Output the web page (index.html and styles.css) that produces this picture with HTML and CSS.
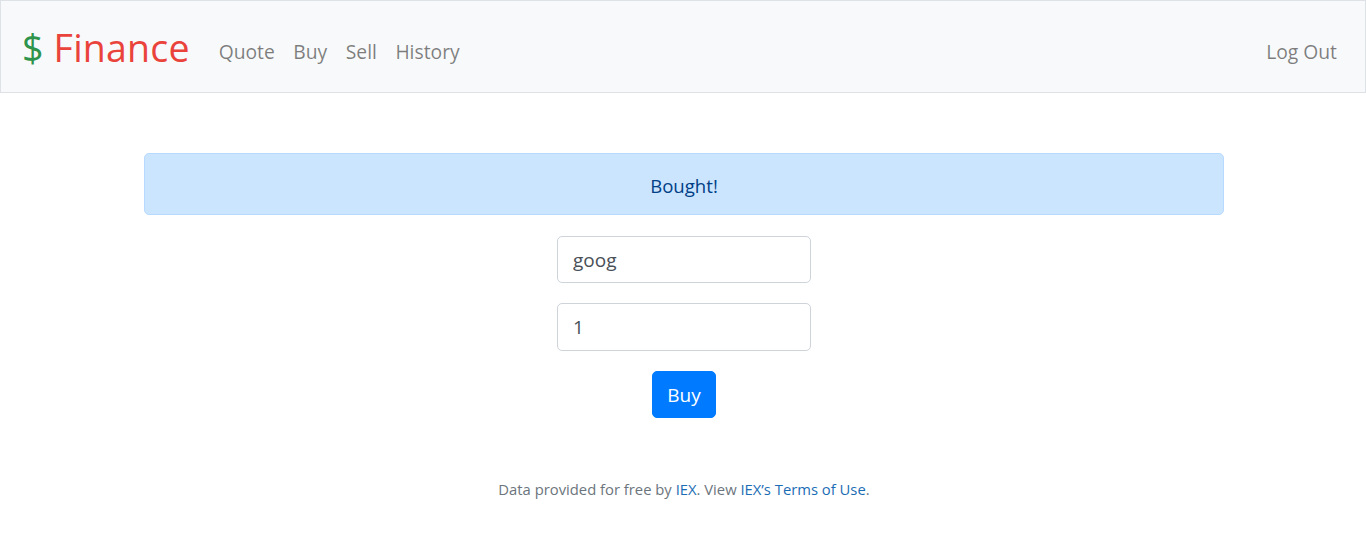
FILE: index.html
```html
<!DOCTYPE html>
<html lang="en">
<head>
<meta charset="utf-8">
<title>C$50 Finance: Buy</title>
<link rel="stylesheet" href="styles.css">
</head>
<body>
<nav class="navbar">
  <a class="brand" href="#"><span class="green">$</span> <span class="red">Finance</span></a>
  <ul class="nav-links">
    <li><a href="#">Quote</a></li>
    <li><a href="#">Buy</a></li>
    <li><a href="#">Sell</a></li>
    <li><a href="#">History</a></li>
  </ul>
  <ul class="nav-links nav-right">
    <li><a href="#">Log Out</a></li>
  </ul>
</nav>
<div class="page">
  <header class="flash">
    <div class="alert">Bought!</div>
  </header>
  <main class="main">
    <form class="buy-form">
      <input class="field" type="text" value="goog" autocomplete="off">
      <input class="field" type="text" value="1">
      <button class="btn" type="button">Buy</button>
    </form>
  </main>
  <footer class="footer">
    Data provided for free by <a href="#">IEX</a>. View <a href="#">IEX’s Terms of Use</a>.
  </footer>
</div>
</body>
</html>
```
FILE: styles.css
```css
* { box-sizing: border-box; }
html, body { margin: 0; padding: 0; }
body {
  font-family: "Open Sans", "Noto Sans", sans-serif;
  background: #fff;
  color: #212529;
}
.navbar {
  display: flex;
  align-items: center;
  height: 93px;
  background: #f8f9fa;
  border: 1px solid #dee2e6;
  padding: 0 28px 0 21px;
}
.brand {
  text-decoration: none;
  font-size: 37.5px;
  line-height: 1;
  margin-right: 29px;
  margin-top: 2px;
  letter-spacing: 0.2px;
}
.green { color: #2e944b; }
.red { color: #ea433b; }
.nav-links {
  display: flex;
  list-style: none;
  margin: 10px 0 0;
  padding: 0;
  gap: 18.5px;
}
.nav-links a {
  color: rgba(0,0,0,0.5);
  text-decoration: none;
  font-size: 19.3px;
}
.nav-right { margin-left: auto; }
.page {
  padding-left: 2px;
}
.flash {
  width: 1080px;
  margin: 60px auto 0;
}
.alert {
  height: 62px;
  display: flex;
  align-items: center;
  justify-content: center;
  background: #cce5ff;
  border: 1px solid #b8daff;
  border-radius: 5px;
  color: #004085;
  font-size: 18.6px;
  padding-top: 3px;
}
.main {
  padding-top: 21px;
}
.buy-form {
  display: flex;
  flex-direction: column;
  align-items: center;
  gap: 20px;
}
.field {
  width: 254px;
  height: 47px;
  border: 1px solid #ced4da;
  border-radius: 5px;
  padding: 0 15px;
  font-family: inherit;
  font-size: 19px;
  color: #495057;
  background: #fff;
}
.field + .field { height: 48px; }
.btn {
  width: 64px;
  height: 47px;
  background: #007bff;
  border: 1px solid #007bff;
  border-radius: 5px;
  color: #fff;
  font-family: inherit;
  font-size: 19px;
  padding: 0;
}
.footer {
  text-align: center;
  font-size: 14.8px;
  color: #6c757d;
  margin-top: 61px;
}
.footer a {
  color: #1a6db4;
  text-decoration: none;
}
```
